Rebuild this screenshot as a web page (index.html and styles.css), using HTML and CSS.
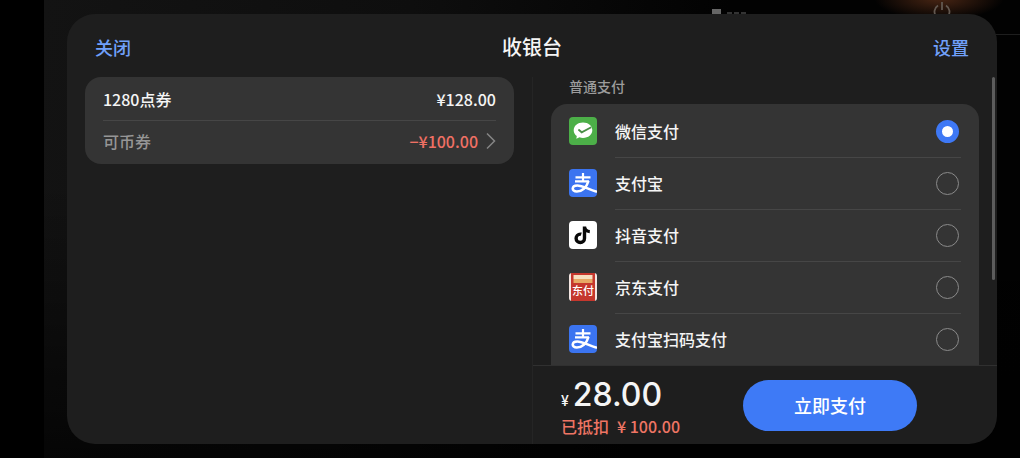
FILE: index.html
```html
<!DOCTYPE html>
<html lang="zh-CN">
<head>
  <meta charset="UTF-8" />
  <meta name="viewport" content="width=device-width, initial-scale=1.0" />
  <title>收银台</title>
  <link rel="stylesheet" href="styles.css">
</head>
<body>
  <!-- game screen behind the cashier -->
  <div class="backdrop" aria-hidden="true">
    <div class="glow"></div>
    <div class="backdrop-line"></div>
    <svg class="backdrop-flag" width="36" height="8" viewBox="0 0 36 8">
      <path d="M0 1h9v5H3v2H0z" fill="#666" />
      <path d="M15 5h5M22 5h5M29 5h5" stroke="#444" stroke-width="1.5" />
    </svg>
    <svg class="backdrop-power" width="18" height="18" viewBox="0 0 18 18">
      <path d="M5 3.500a7.500 7.500 0 1 0 8 0M9 0v8" fill="none" stroke="#625850" stroke-width="1.800" />
    </svg>
  </div>

  <div class="cashier">
    <div class="header">
      <button class="link-button" type="button">关闭</button>
      <h1 class="title">收银台</h1>
      <button class="link-button" type="button">设置</button>
    </div>

    <div class="content">
      <div class="order">
        <div class="card order-card">
          <div class="order-row">
            <span>1280点券</span>
            <span class="amount">¥128.00</span>
          </div>
          <button class="order-row coupon" type="button">
            <span>可币券</span>
            <span class="amount discount">−¥100.00
              <svg class="chevron" width="10" height="18" viewBox="0 0 10 18">
                <path d="M1 1.500L8.500 9L1 16.500" fill="none" stroke="#858585" stroke-width="1.500" />
              </svg>
            </span>
          </button>
        </div>
      </div>

      <div class="payment">
        <div class="methods">
          <div class="group-label" id="groupLabel">普通支付</div>
          <div class="card method-card" role="radiogroup" aria-labelledby="groupLabel">
            <label class="method">
              <svg class="icon" viewBox="0 0 28 28">
                <rect width="28" height="28" rx="4" fill="#4caf48" />
                <path d="M14 5.500c-5.300 0-9.300 3.400-9.300 7.700 0 2.400 1.200 4.400 3.100 5.800l-.5 2.800 3.200-1.500c1.100.4 2.300.6 3.500.6 5.300 0 9.300-3.400 9.300-7.700S19.300 5.500 14 5.500z" fill="#fff" />
                <path d="M9.400 12.500l3.300 2.800 9.500-5" fill="none" stroke="#4a8f47" stroke-width="1.800" />
              </svg>
              <span class="method-name">微信支付</span>
              <input class="radio" type="radio" name="method" value="wechat" checked>
            </label>
            <label class="method">
              <svg class="icon" viewBox="0 0 28 28">
                <rect width="28" height="28" rx="4" fill="#3b74f0" />
                <path d="M6.500 8.300h15M14 4v8.500M6 12.300h14" fill="none" stroke="#fff" stroke-width="2.200" />
                <path d="M19.500 12c-1.800 6.400-6.800 10.500-11.700 10.500-5.600 0-5.300-6 .4-6 5.200 0 10.300 3.400 19.800 6.300" fill="none" stroke="#fff" stroke-width="2.600" />
              </svg>
              <span class="method-name">支付宝</span>
              <input class="radio" type="radio" name="method" value="alipay">
            </label>
            <label class="method">
              <svg class="icon" viewBox="0 0 28 28">
                <rect width="28" height="28" rx="4" fill="#fff" />
                <path d="M15.500 5.500v11.800a4.200 4.200 0 1 1-4.200-4.200c.4 0 .7 0 1 .1M15.500 5.500c.2 3 2 4.900 5.300 5.100" fill="none" stroke="#080808" stroke-width="3.400" />
              </svg>
              <span class="method-name">抖音支付</span>
              <input class="radio" type="radio" name="method" value="douyin">
            </label>
            <label class="method">
              <svg class="icon" viewBox="0 0 28 28">
                <rect width="28" height="28" rx="3" fill="#f3e6e2" />
                <path d="M2 0h24v28H2z" fill="#c5372d" />
                <path d="M4.500 2h19v4h-19z" fill="#f6dfc0" />
                <path d="M4.500 6h19v4h-19z" fill="#e7a965" />
                <text class="jd-text" x="14" y="22" text-anchor="middle">东付</text>
              </svg>
              <span class="method-name">京东支付</span>
              <input class="radio" type="radio" name="method" value="jd">
            </label>
            <label class="method">
              <svg class="icon" viewBox="0 0 28 28">
                <rect width="28" height="28" rx="4" fill="#3b74f0" />
                <path d="M6.500 8.300h15M14 4v8.500M6 12.300h14" fill="none" stroke="#fff" stroke-width="2.200" />
                <path d="M19.500 12c-1.800 6.400-6.800 10.500-11.700 10.500-5.600 0-5.300-6 .4-6 5.200 0 10.300 3.400 19.800 6.300" fill="none" stroke="#fff" stroke-width="2.600" />
              </svg>
              <span class="method-name">支付宝扫码支付</span>
              <input class="radio" type="radio" name="method" value="alipay-scan">
            </label>
          </div>
        </div>

        <div class="footer">
          <div class="summary">
            <div class="total"><span class="currency">¥</span>28.00</div>
            <div class="saved"><span>已抵扣</span><span>¥ 100.00</span></div>
          </div>
          <button class="pay-button" type="button">立即支付</button>
        </div>
      </div>
    </div>
    <div class="scroll-thumb"></div>
  </div>
</body>
</html>
```

FILE: styles.css
```css
* {
  box-sizing: border-box;
}

body {
  font-family: 'Noto Sans CJK SC', sans-serif;
  font-size: 16px;
  font-weight: 500;
  color: #f5f5f5;
  background-color: #000;
  height: 100vh;
  margin: 0;
  padding: 14px 23px 14px 67px;
  overflow: hidden;
}

button {
  font: inherit;
  color: inherit;
  background: none;
  border: none;
  padding: 0;
  cursor: pointer;
}

.backdrop {
  position: absolute;
  inset: 0 0 0 44px;
  background: linear-gradient(100deg, #131313 0%, #0e0e0e 35%, #020202 65%, #020202 100%);
}

.backdrop::after {
  content: "";
  position: absolute;
  inset: 0;
  background: linear-gradient(transparent 40%, rgba(0, 0, 0, 0.7));
}

.glow {
  position: absolute;
  top: -24px;
  right: 16px;
  width: 130px;
  height: 44px;
  background: radial-gradient(closest-side, #4a2614, transparent);
}

.backdrop-line {
  position: absolute;
  top: 34px;
  right: 0;
  width: 60px;
  height: 1px;
  background-color: #1e1e1e;
}

.backdrop-flag {
  position: absolute;
  top: 8px;
  right: 272px;
}

.backdrop-power {
  position: absolute;
  top: 2px;
  right: 69px;
}

.cashier {
  position: relative;
  display: flex;
  flex-direction: column;
  height: 100%;
  background-color: #1e1e1e;
  border-radius: 28px;
  overflow: hidden;
}

.header {
  display: flex;
  justify-content: space-between;
  align-items: center;
  flex: none;
  height: 63px;
  padding: 2px 28px 0;
}

.link-button {
  font-size: 18px;
  line-height: 24px;
  color: #70a0fa;
}

.title {
  font-size: 20px;
  line-height: 28px;
  font-weight: 500;
  margin: 0;
}

.content {
  display: grid;
  grid-template-columns: 1fr 1fr;
  flex: 1;
  min-height: 0;
}

.order {
  padding: 0 18px;
}

.card {
  background-color: #343434;
  border-radius: 16px;
}

.order-card {
  padding: 0 18px;
}

.order-row {
  display: flex;
  justify-content: space-between;
  align-items: center;
  width: 100%;
  height: 43px;
}

.coupon {
  height: 44px;
  padding-bottom: 4px;
  border-top: 1px solid #464646;
  color: #969696;
}

.amount {
  display: flex;
  align-items: center;
  gap: 8px;
}

.discount {
  color: #ef7064;
}

.payment {
  display: flex;
  flex-direction: column;
  min-width: 0;
  min-height: 0;
  border-left: 1px solid #252525;
}

.methods {
  flex: 1;
  min-height: 0;
  padding: 0 18px;
  overflow-y: auto;
  scrollbar-width: none;
}

.group-label {
  height: 27px;
  padding-left: 18px;
  font-size: 14px;
  line-height: 18px;
  color: #9c9c9c;
}

.method-card {
  padding: 1px 18px 18px;
}

.method {
  position: relative;
  display: flex;
  align-items: center;
  gap: 18px;
  height: 52px;
  cursor: pointer;
}

/* divider starts at the name, not under the icon */
.method + .method::before {
  content: "";
  position: absolute;
  top: 0;
  left: 46px;
  right: 0;
  height: 1px;
  background-color: #464646;
}

.icon {
  flex: none;
  width: 28px;
  height: 28px;
}

.jd-text {
  font-size: 11px;
  font-weight: 500;
  fill: #fff;
}

.method-name {
  flex: 1;
}

.radio {
  appearance: none;
  flex: none;
  width: 23px;
  height: 23px;
  margin: 0 2px 0 0;
  border: 1px solid #8a8a8a;
  border-radius: 50%;
  cursor: pointer;
}

.radio:checked {
  border: 6px solid #3e78f5;
  background-color: #fff;
}

.footer {
  display: flex;
  justify-content: space-between;
  align-items: center;
  flex: none;
  height: 79px;
  padding: 0 80px 0 28px;
  border-top: 1px solid #303030;
}

.summary {
  padding-top: 4px;
}

.total {
  font-family: Inter, 'Noto Sans CJK SC', sans-serif;
  font-size: 32px;
  line-height: 38px;
}

.currency {
  font-size: 14px;
  line-height: 1;
  margin-right: 4px;
}

.saved {
  display: flex;
  gap: 8px;
  line-height: 24px;
  color: #ee7564;
}

.pay-button {
  width: 174px;
  height: 51px;
  border-radius: 26px;
  background-color: #3e7af6;
  font-size: 18px;
  color: #fff;
}

.scroll-thumb {
  position: absolute;
  top: 63px;
  right: 2px;
  width: 3px;
  height: 203px;
  border-radius: 2px;
  background-color: #5c5c5c;
}
```
